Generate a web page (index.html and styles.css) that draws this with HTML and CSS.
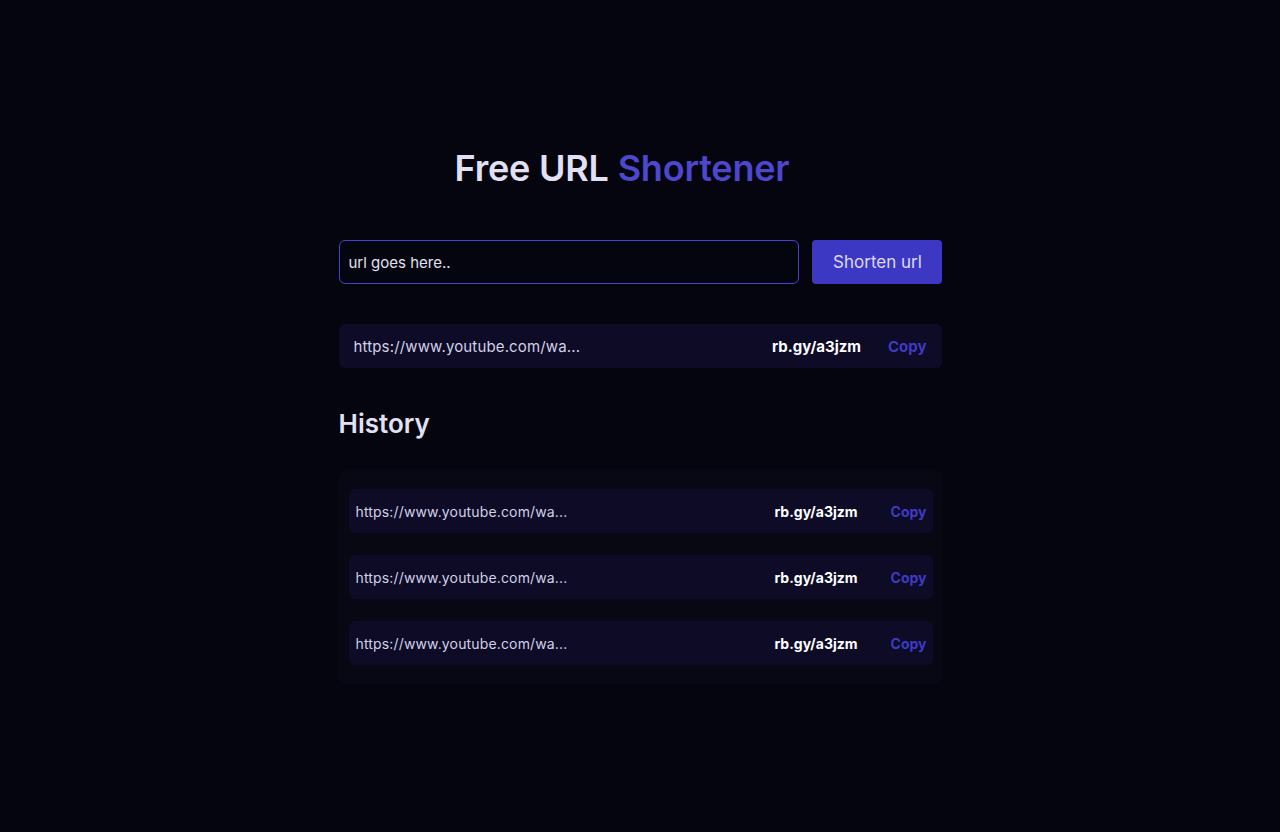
FILE: index.html
```html
<!DOCTYPE html>
<html lang="en">
<head>
<meta charset="utf-8">
<title>Free URL Shortener</title>
<link rel="stylesheet" href="styles.css">
</head>
<body>
<main class="app">
  <h1 class="title">Free URL <span class="accent">Shortener</span></h1>
  <form class="form">
    <input class="url-input" type="text" placeholder="url goes here..">
    <button class="btn" type="button">Shorten url</button>
  </form>
  <div class="result">
    <span class="long">https://www.youtube.com/wa...</span>
    <span class="short">rb.gy/a3jzm</span>
    <span class="copy">Copy</span>
  </div>
  <h2 class="history-title">History</h2>
  <div class="history">
    <div class="item">
      <span class="long">https://www.youtube.com/wa...</span>
      <span class="short">rb.gy/a3jzm</span>
      <span class="copy">Copy</span>
    </div>
    <div class="item">
      <span class="long">https://www.youtube.com/wa...</span>
      <span class="short">rb.gy/a3jzm</span>
      <span class="copy">Copy</span>
    </div>
    <div class="item">
      <span class="long">https://www.youtube.com/wa...</span>
      <span class="short">rb.gy/a3jzm</span>
      <span class="copy">Copy</span>
    </div>
  </div>
</main>
</body>
</html>
```

FILE: styles.css
```css
* { box-sizing: border-box; }
html, body {
  margin: 0;
  padding: 0;
  background: #05050f;
  font-family: Inter, "Noto Sans", sans-serif;
  color: #e2e1f3;
}
.app {
  width: 603px;
  margin: 0 auto;
  padding-top: 145px;
  display: flex;
  flex-direction: column;
}
.title {
  margin: 0;
  font-size: 36px;
  font-weight: 600;
  line-height: 46px;
  text-align: center;
  padding-right: 36px;
  color: #e2e1f3;
  letter-spacing: -0.2px;
}
.accent { color: #4c47cc; }
.form {
  display: flex;
  gap: 13px;
  margin: 49px 0 0;
}
.url-input {
  width: 460px;
  height: 44px;
  background: #05050f;
  border: 1px solid #4640d0;
  border-radius: 6px;
  padding: 0 9px;
  font-family: inherit;
  font-size: 15px;
  color: #e2e1f3;
  outline: none;
}
.url-input::placeholder { color: #e2e1f3; opacity: 1; }
.btn {
  width: 130px;
  height: 44px;
  background: #3c38c4;
  border: none;
  border-radius: 4px;
  color: #dcdaf5;
  font-family: inherit;
  font-size: 17px;
  font-weight: 400;
  padding: 0 0 0 2px;
}
.result, .item {
  display: flex;
  align-items: center;
  height: 44px;
  background: #0d0b26;
  border-radius: 6px;
}
.result {
  margin-top: 40px;
  padding: 0 15px 0 15px;
  font-size: 15px;
}
.long { flex: 1; color: #d2d1e8; letter-spacing: 0.15px; }
.short { font-weight: 700; color: #ffffff; }
.copy { font-weight: 700; color: #3f3ac4; }
.result .copy { margin-left: 27px; }
.history-title {
  margin: 40px 0 0;
  font-size: 26px;
  font-weight: 600;
  line-height: 32px;
  color: #e2e1f3;
}
.history {
  margin-top: 30px;
  background: #080814;
  border-radius: 8px;
  padding: 19px 9px 19px 10px;
  display: flex;
  flex-direction: column;
  gap: 22px;
}
.item {
  padding: 0 6px 0 7px;
  font-size: 14px;
}
.item .copy { margin-left: 33px; }
```
